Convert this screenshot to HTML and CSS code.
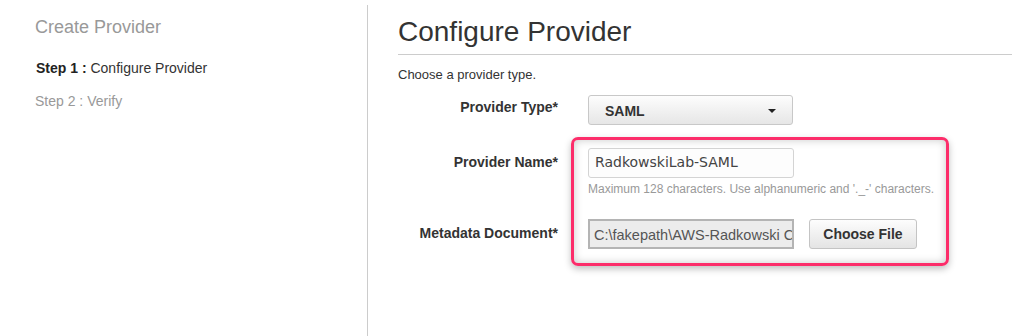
FILE: index.html
```html
<!DOCTYPE html>
<html>
    <head>
        <meta charset="utf-8">
        <title>Create Provider</title>
        <link rel="stylesheet" href="styles.css">
    </head>
    <body>
        <div class="wrapper">
            <div class="sideNav">
                <h2 class="sideTitle">Create Provider</h2>
                <p class="step current"><b>Step 1 :</b> Configure Provider</p>
                <p class="step">Step 2 : Verify</p>
            </div>

            <div class="mainCont">
                <h1 class="pageTitle">Configure Provider</h1>
                <p class="intro">Choose a provider type.</p>

                <form class="form">
                    <div class="row rowType">
                        <label class="label">Provider Type*</label>
                        <div class="control">
                            <div class="select">SAML<span class="caret"></span></div>
                        </div>
                    </div>
                    <div class="row rowName">
                        <label class="label">Provider Name*</label>
                        <div class="control">
                            <div class="textInput">RadkowskiLab-SAML</div>
                            <p class="hint">Maximum 128 characters. Use alphanumeric and '._-' characters.</p>
                        </div>
                    </div>
                    <div class="row rowFile">
                        <label class="label">Metadata Document*</label>
                        <div class="control fileControl">
                            <div class="fileInput">C:\fakepath\AWS-Radkowski Cloud</div>
                            <button type="button" class="button">Choose File</button>
                        </div>
                    </div>
                    <div class="highlight"></div>
                </form>
            </div>
        </div>
    </body>
</html>
```

FILE: styles.css
```css
* {
    margin: 0;
    padding: 0;
    box-sizing: border-box;
}

body {
    background-color: #fff;
    font-family: 'Liberation Sans', Arial, sans-serif;
    color: #333;
    overflow: hidden;
}

.wrapper {
    display: flex;
    flex-flow: row nowrap;
    height: 336px;
}

.sideNav {
    width: 368px;
    margin-top: 5px;
    padding-left: 35px;
    border-right: 1px solid #ccc;
}
.sideTitle {
    font-size: 18px;
    font-weight: normal;
    color: #999;
    margin-top: 12px;
    line-height: 20px;
}
.step {
    font-size: 14px;
    line-height: 16px;
    color: #999;
    margin-top: 17px;
}
.step.current {
    color: #333;
    margin-top: 23px;
    padding-left: 1px;
}
.step.current b {
    color: #222;
}

.mainCont {
    flex: 1;
    padding-left: 30px;
}

.pageTitle {
    font-size: 28px;
    font-weight: normal;
    color: #333;
    line-height: 32px;
    margin-top: 16px;
    padding-bottom: 6px;
    border-bottom: 1px solid #ccc;
}
.intro {
    font-size: 13px;
    line-height: 16px;
    margin-top: 12px;
}

.form {
    position: relative;
    margin-top: 12px;
}

.row {
    display: flex;
    flex-flow: row nowrap;
    align-items: flex-start;
}
.rowName {
    margin-top: 23px;
}
.rowFile {
    margin-top: 23px;
}

.label {
    width: 160px;
    text-align: right;
    font-size: 14px;
    font-weight: bold;
    color: #333;
    padding-top: 4px;
}
.rowName .label {
    padding-top: 6px;
}
.rowFile .label {
    padding-top: 6px;
}

.control {
    margin-left: 30px;
}
.fileControl {
    display: flex;
    flex-flow: row nowrap;
    align-items: center;
}

.select {
    position: relative;
    width: 205px;
    height: 30px;
    padding: 7px 0 0 16px;
    font-size: 14px;
    font-weight: bold;
    color: #333;
    border: 1px solid #c8c8c8;
    border-radius: 3px;
    background: linear-gradient(#fdfdfd, #e6e6e6);
}
.caret {
    position: absolute;
    right: 16px;
    top: 13px;
    border-left: 4px solid transparent;
    border-right: 4px solid transparent;
    border-top: 4px solid #222;
}

.textInput {
    width: 206px;
    height: 30px;
    padding: 5px 0 0 6px;
    font-family: 'DejaVu Sans', Verdana, sans-serif;
    font-size: 14px;
    color: #444;
    border: 1px solid #d4d4d4;
    border-radius: 3px;
    background-color: #fdfdfd;
}
.hint {
    font-size: 12px;
    color: #999;
    margin-top: 4px;
}

.fileInput {
    width: 206px;
    height: 30px;
    padding: 6px 0 0 4px;
    font-size: 14.5px;
    color: #555;
    white-space: nowrap;
    overflow: hidden;
    border: 2px solid #b4b4b4;
    background-color: #ececec;
}

.button {
    width: 108px;
    height: 30px;
    margin-left: 15px;
    font-family: 'Liberation Sans', Arial, sans-serif;
    font-size: 14px;
    font-weight: bold;
    color: #333;
    border: 1px solid #c4c4c4;
    border-radius: 3px;
    background: linear-gradient(#fdfdfd, #e4e4e4);
}

/* screenshot annotation around the name + file fields */
.highlight {
    position: absolute;
    left: 173px;
    top: 42px;
    width: 378px;
    height: 129px;
    border: 3px solid #fc2d6a;
    border-radius: 7px;
    box-shadow: inset 0 0 8px rgba(0, 0, 0, 0.22), 0 3px 7px rgba(0, 0, 0, 0.25);
    pointer-events: none;
}
```
